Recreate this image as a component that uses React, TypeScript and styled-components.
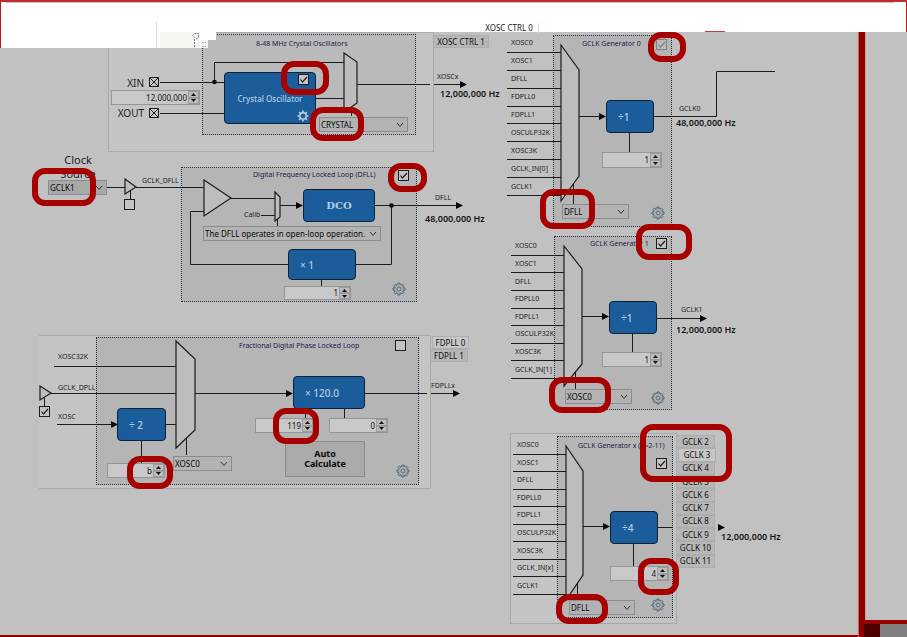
import React from "react";
import styled, { createGlobalStyle, css } from "styled-components";

const color = {
  canvas: "#c1c1c1",
  panel: "#b5b5b5",
  frame: "#a9a9a9",
  ink: "#1c1c1c",
  navy: "#1c1c4c",
  blue: "#1b5d9b",
  ring: "#a60000",
  divider: "#900000",
};

const GlobalStyle = createGlobalStyle`
  * { box-sizing: border-box; }
  body { margin: 0; background: ${color.canvas}; }
  body, button, input, select { font-family: "Noto Sans", "Open Sans", sans-serif; }
`;

/* ---------- page frame ---------- */

const Page = styled.div`
  display: grid;
  grid-template-columns: minmax(0, 1fr) 7px 42px;
  grid-template-rows: 32px minmax(0, 1fr);
  min-height: 100vh;
  background: ${color.canvas};
`;

const Header = styled.header`
  grid-area: 1 / 1 / 2 / 4;
  background: #fff;
  border: solid #b41c1c;
  border-width: 2px 1px 0 1px;
  border-top-color: #b83030;
`;

const HeaderGlow = styled.div`
  height: 1px;
  margin: 0 12px 0 5px;
  background: #f4b4b4;
`;

const Divider = styled.div`
  grid-area: 2 / 2;
  background: ${color.divider};
  border-left: 1px solid #b46464;
`;

const SidePane = styled.aside`
  grid-area: 2 / 3;
  display: grid;
  grid-template-rows: 1fr 17px;
  border-left: 1px solid #c89c9c;
`;

const SideFooter = styled.div`
  display: flex;
  margin-left: -2px;
  border-top: 4px solid #980000;
  background: #808080;
`;

const FooterSwatch = styled.div`
  width: 16px;
  background: #4c0000;
`;

const Diagram = styled.main`
  grid-area: 1 / 1 / 3 / 2;
  position: relative;
  min-height: 637px;
  border-bottom: 2px solid #980000;
`;

/* ---------- diagram nodes ---------- */

type Spot = { $x: number; $y: number };
type Area = Spot & { $w: number; $h: number };

const at = css<Spot>`
  position: absolute;
  left: ${(p) => p.$x}px;
  top: ${(p) => p.$y}px;
`;
const area = css<Area>`
  ${at}
  width: ${(p) => p.$w}px;
  height: ${(p) => p.$h}px;
`;

const Paper = styled.div<Area & { $tone?: string }>`
  ${area}
  background: ${(p) => p.$tone ?? "#fff"};
`;

const Frame = styled.div<Area & { $open?: boolean }>`
  ${area}
  border: 1px solid ${color.frame};
  background: #c4c4c4;
  ${(p) => p.$open && "border-left: 0;"}
`;

const Panel = styled.section<Area & { $tone?: string }>`
  ${area}
  border: 1px dotted #26303c;
  background: ${(p) => p.$tone ?? color.panel};
`;

const Title = styled.h2<Spot>`
  ${at}
  margin: 0;
  font-size: 7px;
  line-height: 10px;
  font-weight: 400;
  color: ${color.navy};
  white-space: nowrap;
`;

const Signal = styled.span<Spot>`
  ${at}
  font-size: 7px;
  line-height: 10px;
  color: ${color.ink};
  white-space: nowrap;
`;

const Frequency = styled.output<Spot>`
  ${at}
  font-size: 9px;
  line-height: 12px;
  font-weight: 600;
  color: #141414;
  white-space: nowrap;
`;

const Block = styled.div<Area & { $serif?: boolean; $size?: number; $shift?: boolean }>`
  ${area}
  display: flex;
  align-items: center;
  justify-content: ${(p) => (p.$shift ? "flex-start" : "center")};
  padding-left: ${(p) => (p.$shift ? 11 : 0)}px;
  border: 1px solid #0e2338;
  border-radius: 4px;
  background: ${color.blue};
  color: #b4cde2;
  font-size: ${(p) => p.$size ?? 10}px;
  font-weight: ${(p) => (p.$serif ? 700 : 500)};
  ${(p) => p.$serif && 'font-family: "DejaVu Serif", serif;'}
  white-space: pre;
`;

const InputList = styled.ul<Area>`
  ${area}
  display: grid;
  grid-auto-rows: 1fr;
  margin: 0;
  padding: 0;
  list-style: none;
`;

const InputItem = styled.li`
  display: flex;
  align-items: center;
  padding-left: 4px;
  border-bottom: 1px solid ${color.ink};
  font-size: 7px;
  line-height: 10px;
  color: ${color.ink};
  white-space: nowrap;
`;

const Ring = styled.div<Area>`
  ${area}
  border: 6px solid ${color.ring};
  border-radius: 13px;
  pointer-events: none;
`;

const WireLayer = styled.svg`
  position: absolute;
  left: 0;
  top: 0;
  overflow: visible;
  pointer-events: none;
`;

/* ---------- controls ---------- */

const SpinBox = styled.div<Area>`
  ${area}
  display: flex;
  border: 1px solid #969696;
  background: #c8c8c8;
`;

const SpinInput = styled.input`
  flex: 1;
  min-width: 0;
  padding: 0 1px 0 0;
  border: 0;
  background: transparent;
  font-size: 8px;
  line-height: 12px;
  color: #141414;
  text-align: right;
`;

const SpinButtons = styled.div`
  display: grid;
  grid-template-rows: 1fr 1fr;
  width: 11px;
`;

const SpinButton = styled.button`
  display: flex;
  align-items: center;
  justify-content: center;
  min-height: 0;
  padding: 0;
  border: 1px solid #9c9c9c;
  background: #bcbcbc;
  svg { display: block; }
`;

const Picker = styled.div<Area & { $dark?: boolean }>`
  ${area}
  border: 1px solid #8c8c8c;
  background: ${(p) => (p.$dark ? "#a9a9a9" : "#b3b3b3")};
  svg {
    position: absolute;
    right: 3px;
    top: 4px;
    pointer-events: none;
  }
`;

const PickerSelect = styled.select`
  display: block;
  appearance: none;
  width: 100%;
  height: 100%;
  padding: 0 12px 0 1px;
  border: 0;
  background: transparent;
  font-size: 8px;
  font-weight: 400;
  color: #080808;
`;

const TickFrame = styled.label<Spot & { $muted?: boolean }>`
  ${at}
  width: 11px;
  height: 11px;
  opacity: ${(p) => (p.$muted ? 0.35 : 1)};
  svg {
    position: absolute;
    left: 0;
    top: 0;
    pointer-events: none;
  }
`;

const TickInput = styled.input`
  display: block;
  appearance: none;
  width: 100%;
  height: 100%;
  margin: 0;
  border: 1px solid #1c1c1c;
  background: #c4c4c4;
  & + svg { display: none; }
  &:checked + svg { display: block; }
`;

const Tabs = styled.div<Area>`
  ${area}
  display: grid;
  grid-auto-rows: 1fr;
`;

const Tab = styled.button<{ $active?: boolean }>`
  display: flex;
  align-items: center;
  justify-content: center;
  min-height: 0;
  margin-left: ${(p) => (p.$active ? 2 : 0)}px;
  margin-right: ${(p) => (p.$active ? -1 : 0)}px;
  padding: 0;
  border: 1px solid #adadad;
  background: ${(p) => (p.$active ? "#c6c6c6" : "#b7b7b7")};
  font-size: 8px;
  line-height: 10px;
  color: #101010;
  white-space: nowrap;
`;

const HeaderTab = styled.button<Area>`
  ${area}
  padding: 0;
  border: 0;
  border-right: 1px solid #dcdcdc;
  background: transparent;
  font-size: 8px;
  line-height: 10px;
  color: #202020;
`;

const ActionButton = styled.button<Area>`
  ${area}
  padding: 0 12px;
  border: 1px solid #8c8c8c;
  background: #aaaaaa;
  font-size: 9px;
  line-height: 10px;
  font-weight: 700;
  color: #080808;
`;

const IconButton = styled.button<Spot>`
  ${at}
  display: flex;
  padding: 0;
  border: 0;
  background: transparent;
`;

const SourceLabel = styled.label<Spot>`
  ${at}
  width: 40px;
  font-size: 11px;
  line-height: 14px;
  color: ${color.ink};
  text-align: center;
`;

const PinLabel = styled.span<Spot>`
  ${at}
  width: 32px;
  font-size: 10px;
  line-height: 12px;
  color: ${color.ink};
  text-align: right;
`;

function Spin({ box, value, name }: { box: number[]; value: string; name: string }) {
  return (
    <SpinBox $x={box[0]} $y={box[1]} $w={box[2]} $h={box[3]}>
      <SpinInput aria-label={name} defaultValue={value} />
      <SpinButtons>
        <SpinButton aria-label={`Increase ${name}`}>
          <svg width="5" height="3"><path d="M0 3L2.500 0L5 3Z" fill="#111" /></svg>
        </SpinButton>
        <SpinButton aria-label={`Decrease ${name}`}>
          <svg width="5" height="3"><path d="M0 0L2.500 3L5 0Z" fill="#111" /></svg>
        </SpinButton>
      </SpinButtons>
    </SpinBox>
  );
}

function Pick({ box, value, name, id, dark }: { box: number[]; value: string; name: string; id?: string; dark?: boolean }) {
  return (
    <Picker $x={box[0]} $y={box[1]} $w={box[2]} $h={box[3]} $dark={dark}>
      <PickerSelect id={id} aria-label={name} defaultValue={value}>
        <option>{value}</option>
      </PickerSelect>
      <svg width="8" height="6" fill="none" stroke="#333"><path d="M1 1L4 4.500L7 1" /></svg>
    </Picker>
  );
}

function Tick({ x, y, name, on = true, muted }: { x: number; y: number; name: string; on?: boolean; muted?: boolean }) {
  return (
    <TickFrame $x={x} $y={y} $muted={muted}>
      <TickInput type="checkbox" aria-label={name} defaultChecked={on} disabled={muted} />
      <svg width="11" height="11" fill="none" stroke="#1c1c1c" strokeWidth="1.2"><path d="M2.500 5.500L4.500 8L9 3" /></svg>
    </TickFrame>
  );
}

const teeth = Array.from({ length: 8 }, (_, i) => i * 45);

function Gear({ x, y, name, solid }: { x: number; y: number; name: string; solid?: boolean }) {
  const stroke = solid ? "#c4d4e4" : "#46606e";
  return (
    <IconButton $x={x - 7} $y={y - 7} aria-label={name}>
      <svg width="14" height="14" viewBox="-7 -7 14 14" fill="none" stroke={stroke}>
        {solid ? (
          <>
            <circle r="3.200" strokeWidth="1.500" />
            {teeth.map((a) => <path key={a} d="M0 -3.800V-5.400" strokeWidth="1.600" transform={`rotate(${a})`} />)}
          </>
        ) : (
          <>
            {teeth.map((a) => (
              <path key={a} d="M-1.900 -4.500L-1.200 -4.900L-1 -6H1L1.200 -4.900L1.900 -4.500" strokeWidth="0.900" transform={`rotate(${a})`} />
            ))}
            <circle r="4.300" strokeWidth="0.500" />
            <circle r="2" strokeWidth="0.900" />
          </>
        )}
      </svg>
    </IconButton>
  );
}

const generatorInputs = ["XOSC0", "XOSC1", "DFLL", "FDPLL0", "FDPLL1", "OSCULP32K", "XOSC3K"];

const generators = [
  {
    title: "GCLK Generator 0", titleAt: [582, 39], panel: [553, 35, 119, 192],
    list: [507, 35, 54, 161], inputs: [...generatorInputs, "GCLK_IN[0]", "GCLK1"],
    block: [606, 100, 48, 33], divide: "÷1", spin: [602, 152, 60, 16], value: "1",
    pick: [562, 204, 67, 15], source: "DFLL", gear: [658, 213], tick: [656, 39], muted: true,
  },
  {
    title: "GCLK Generator 1", titleAt: [590, 239], panel: [554, 236, 118, 174],
    list: [511, 238, 53, 141], inputs: [...generatorInputs, "GCLK_IN[1]"],
    block: [609, 301, 48, 33], divide: "÷1", spin: [602, 352, 60, 15], value: "1",
    pick: [565, 389, 67, 15], source: "XOSC0", gear: [658, 398], tick: [656, 238], muted: false,
  },
  {
    title: "GCLK Generator x (x=2-11)", titleAt: [578, 441], panel: [557, 436, 116, 182],
    list: [513, 437, 53, 158], inputs: [...generatorInputs, "GCLK_IN[x]", "GCLK1"],
    block: [610, 511, 48, 33], divide: "÷4", spin: [610, 566, 59, 15], value: "4",
    pick: [569, 600, 66, 15], source: "DFLL", gear: [658, 605], tick: [656, 458], muted: false,
  },
];

const rings = [
  [281, 61, 48, 34], [310, 107, 54, 34], [648, 32, 38, 30], [32, 168, 64, 38],
  [388, 163, 39, 29], [540, 189, 55, 40], [636, 224, 56, 36], [549, 377, 62, 36],
  [127, 456, 46, 33], [273, 408, 46, 36], [640, 424, 92, 58], [638, 558, 41, 37],
  [556, 594, 52, 30],
];

const muxes = [
  "M344 53L357 62V103L344 112Z",
  "M275 192L280 197V217L275 221Z",
  "M204 180L231 198L204 216Z",
  "M125 179L136 187L125 194Z",
  "M40 386L51 393L40 400Z",
  "M176 341L195 359V430L176 448Z",
  "M561 45L579 70V176L561 201Z",
  "M564 246L582 269V364L564 386Z",
  "M566 446L583 471V575L566 600Z",
];

const wires = [
  "M160 82.500H224", "M160 113.500H224", "M214.500 82V62.500H344", "M316 98.500H344", "M357 84.500H430",
  "M434 84.500H462", "M351.500 107V116",
  "M107 187.500H125", "M136 187.500H204", "M130.500 191V200", "M231 198.500H275", "M204 211.500H190.500V264.500H288",
  "M261 215.500H275", "M277.500 219V226", "M280 205.500H298", "M375 205.500H458", "M391.500 205V264.500H356", "M321.500 280V286",
  "M54 366.500H176", "M51 393.500H176", "M57 424.500H112", "M166 424.500H176", "M186.500 438V455", "M141.500 440V463",
  "M44.500 397V406", "M195 393.500H288", "M365 393.500H427", "M431 393.500H455", "M305.500 409V418", "M344.500 409V418",
  "M579 116.500H601", "M654 116.500H716.500V71.500H775", "M629.500 133V152", "M573.500 183V204",
  "M582 316.500H604", "M657 318.500H702", "M632.500 334V352", "M575.500 371V389",
  "M583 526.500H606", "M658 527.500H673", "M633.500 543V566", "M577.500 584V600",
];

const arrowTips = [
  [467, 84], [303, 205], [463, 205], [118, 424], [293, 393], [460, 393],
  [606, 116], [609, 316], [707, 318], [610, 526], [725, 527],
];

function Wires() {
  return (
    <WireLayer width="857" height="635" aria-hidden="true">
      <g fill="#bdbdbd" stroke={color.ink} strokeWidth="1.200">{muxes.map((d) => <path key={d} d={d} />)}</g>
      <g fill="none" stroke={color.ink}>{wires.map((d) => <path key={d} d={d} />)}</g>
      <g fill="#080808">
        {arrowTips.map(([x, y]) => <path key={`${x}-${y}`} d={`M${x} ${y + 0.5}l-7 -3.500v7z`} />)}
        <circle cx="214.500" cy="82" r="2.300" />
        <circle cx="391.500" cy="205.500" r="2.300" />
      </g>
      <g fill="none" stroke={color.ink}>
        <path d="M149.500 77.500h9v9h-9zl9 9m0 -9l-9 9" />
        <path d="M149.500 108.500h9v9h-9zl9 9m0 -9l-9 9" />
      </g>
      <g fill="none" stroke="#74746c" strokeDasharray="2 1">
        <path d="M194.500 47V37.500L192.500 35.500L194.500 33.500H198.500V37.500L195.500 39.500" />
        <path d="M202 42.500H206M202 46.500H206" stroke="#a8a8a0" />
      </g>
    </WireLayer>
  );
}

export default function App() {
  return (
    <>
      <GlobalStyle />
      <Page>
        <Header><HeaderGlow /></Header>
        <Divider />
        <SidePane>
          <div />
          <SideFooter><FooterSwatch /></SideFooter>
        </SidePane>
        <Diagram>
          <Frame $x={108} $y={32} $w={326} $h={120} />
          <Panel $x={202} $y={34} $w={214} $h={101} $tone="#bababa" />
          <Paper $x={1} $y={32} $w={159} $h={16} />
          <Paper $x={160} $y={32} $w={48} $h={16} $tone="#f6f6f2" />
          <Paper $x={200} $y={32} $w={16} $h={8} />
          <Paper $x={0} $y={32} $w={1} $h={16} $tone="#b41c1c" />
          <Paper $x={156} $y={21} $w={1} $h={27} $tone="#dcdcdc" />
          <Paper $x={705} $y={31} $w={20} $h={1} $tone="#c83c3c" />
          <Panel $x={181} $y={167} $w={236} $h={135} />
          <Frame $x={39} $y={335} $w={392} $h={154} $open />
          <Panel $x={96} $y={337} $w={323} $h={148} />
          <Frame $x={510} $y={433} $w={167} $h={191} />
          {generators.map((g) => (
            <Panel key={g.title} $x={g.panel[0]} $y={g.panel[1]} $w={g.panel[2]} $h={g.panel[3]} />
          ))}

          <SourceLabel $x={58} $y={153} htmlFor="clock-source">Clock Source</SourceLabel>
          <Wires />

          <HeaderTab $x={480} $y={23} $w={59} $h={10}>XOSC CTRL 0</HeaderTab>
          <Tabs $x={433} $y={35} $w={56} $h={13}><Tab>XOSC CTRL 1</Tab></Tabs>
          <Title $x={256} $y={39}>8-48 MHz Crystal Oscillators</Title>
          <PinLabel $x={112} $y={77}>XIN</PinLabel>
          <PinLabel $x={112} $y={107}>XOUT</PinLabel>
          <Spin box={[111, 90, 89, 15]} value="12,000,000" name="XOSC frequency" />
          <Block $x={224} $y={72} $w={92} $h={52} $size={8}>Crystal Oscillator</Block>
          <Tick x={298} y={74} name="Enable crystal oscillator" />
          <Gear x={303} y={116} name="Crystal oscillator settings" solid />
          <Pick box={[319, 117, 89, 15]} value="CRYSTAL" name="Oscillator mode" />
          <Signal $x={437} $y={72}>XOSCx</Signal>
          <Frequency $x={440} $y={88}>12,000,000 Hz</Frequency>

          <Pick box={[48, 180, 59, 15]} value="GCLK1" name="Clock Source" id="clock-source" dark />
          <Signal $x={142} $y={176}>GCLK_DFLL</Signal>
          <Tick x={124} y={199} name="GCLK_DFLL request" on={false} />
          <Title $x={253} $y={170}>Digital Frequency Locked Loop (DFLL)</Title>
          <Tick x={398} y={170} name="Enable DFLL" />
          <Signal $x={244} $y={210}>Calib</Signal>
          <Block $x={303} $y={189} $w={72} $h={33} $serif>DCO</Block>
          <Pick box={[203, 226, 178, 15]} value="The DFLL operates in open-loop operation." name="DFLL mode" />
          <Block $x={288} $y={249} $w={68} $h={31} $shift>× 1</Block>
          <Spin box={[284, 286, 67, 14]} value="1" name="DFLL multiplier" />
          <Gear x={399} y={289} name="DFLL settings" />
          <Signal $x={435} $y={193}>DFLL</Signal>
          <Frequency $x={425} $y={213}>48,000,000 Hz</Frequency>

          <Title $x={239} $y={341}>Fractional Digital Phase Locked Loop</Title>
          <Tick x={395} y={340} name="Enable FDPLL" on={false} />
          <Signal $x={58} $y={352}>XOSC32K</Signal>
          <Signal $x={58} $y={383}>GCLK_DPLL</Signal>
          <Signal $x={58} $y={412}>XOSC</Signal>
          <Tick x={39} y={406} name="GCLK_DPLL request" />
          <Block $x={117} $y={408} $w={49} $h={33} $shift>÷ 2</Block>
          <Spin box={[107, 463, 58, 15]} value="b" name="XOSC divider" />
          <Pick box={[173, 456, 59, 15]} value="XOSC0" name="FDPLL reference" />
          <Block $x={293} $y={376} $w={72} $h={33} $shift>× 120.0</Block>
          <Spin box={[255, 418, 59, 15]} value="119" name="FDPLL integer part" />
          <Spin box={[329, 418, 59, 15]} value="0" name="FDPLL fraction part" />
          <ActionButton $x={285} $y={441} $w={80} $h={36}>Auto Calculate</ActionButton>
          <Gear x={403} y={471} name="FDPLL settings" />
          <Tabs $x={430} $y={336} $w={38} $h={26}><Tab $active>FDPLL 0</Tab><Tab>FDPLL 1</Tab></Tabs>
          <Signal $x={431} $y={381}>FDPLLx</Signal>

          {generators.map((g) => (
            <React.Fragment key={g.title}>
              <InputList $x={g.list[0]} $y={g.list[1]} $w={g.list[2]} $h={g.list[3]}>
                {g.inputs.map((name) => <InputItem key={name}>{name}</InputItem>)}
              </InputList>
              <Title $x={g.titleAt[0]} $y={g.titleAt[1]}>{g.title}</Title>
              <Tick x={g.tick[0]} y={g.tick[1]} name={`Enable ${g.title}`} muted={g.muted} />
              <Block $x={g.block[0]} $y={g.block[1]} $w={g.block[2]} $h={g.block[3]} $shift>{g.divide}</Block>
              <Spin box={g.spin} value={g.value} name={`${g.title} divider`} />
              <Pick box={g.pick} value={g.source} name={`${g.title} source`} />
              <Gear x={g.gear[0]} y={g.gear[1]} name={`${g.title} settings`} />
            </React.Fragment>
          ))}
          <Signal $x={679} $y={104}>GCLK0</Signal>
          <Frequency $x={676} $y={117}>48,000,000 Hz</Frequency>
          <Signal $x={681} $y={305}>GCLK1</Signal>
          <Frequency $x={676} $y={324}>12,000,000 Hz</Frequency>
          <Frequency $x={721} $y={531}>12,000,000 Hz</Frequency>
          <Tabs $x={676} $y={435} $w={39} $h={133}>
            {[2, 3, 4, 5, 6, 7, 8, 9, 10, 11].map((n) => <Tab key={n} $active={n === 3}>GCLK {n}</Tab>)}
          </Tabs>

          {rings.map(([x, y, w, h]) => <Ring key={`${x}-${y}`} $x={x} $y={y} $w={w} $h={h} />)}
        </Diagram>
      </Page>
    </>
  );
}
